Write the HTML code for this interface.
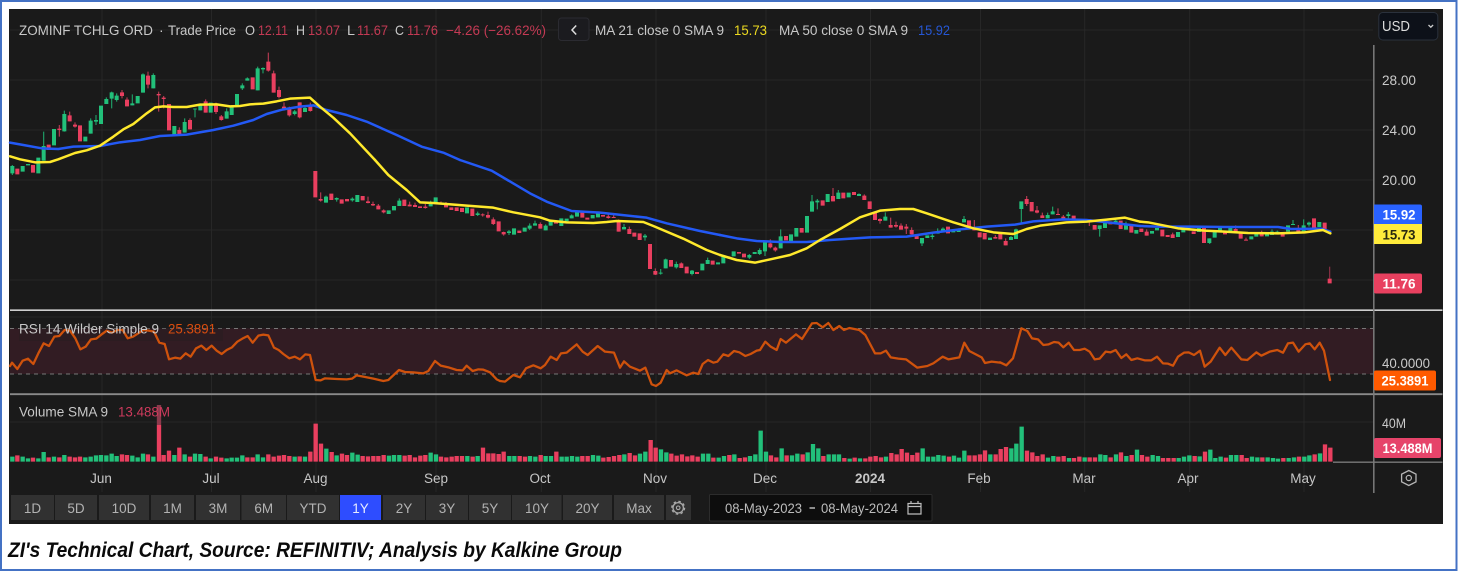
<!DOCTYPE html>
<html lang="en"><head><meta charset="utf-8"><title>ZI's Technical Chart</title>
<style>
html,body{margin:0;padding:0;background:#fff;width:1458px;height:571px;overflow:hidden}
svg{display:block}
text{font-family:"Liberation Sans",sans-serif;font-size:14px;fill:#c8c8c8}
.t{fill:#fff;font-size:14px;font-weight:700;text-anchor:middle}
.b{text-anchor:middle;fill:#b2b2b2;font-size:13.5px}
.m{text-anchor:middle;fill:#c6c6c6;font-size:13.5px}
.a{fill:#cacaca;font-size:14px}
.r{fill:#c43a54}
.gb{stroke:#22c07a;stroke-width:12;fill:none}
.rb{stroke:#e93f5f;stroke-width:12;fill:none}
.gw{stroke:#1f9e66;stroke-width:3.5;fill:none}
.rw{stroke:#b53a52;stroke-width:3.5;fill:none}
.gv{stroke:#22c07a;stroke-width:13;fill:none}
.rv{stroke:#e93f5f;stroke-width:13;fill:none}
.y{stroke:#ffe92c;stroke-width:7.5;fill:none;stroke-linejoin:round;stroke-linecap:round}
.u{stroke:#2359f5;stroke-width:7.5;fill:none;stroke-linejoin:round;stroke-linecap:round}
.s{stroke:#cf520c;stroke-width:6.8;fill:none;stroke-linejoin:round;stroke-linecap:round}
</style></head><body>
<svg width="1458" height="571" viewBox="0 0 1458 571" xmlns="http://www.w3.org/2000/svg">
<rect x="1" y="1" width="1455.5" height="569" fill="#fff" stroke="#4472c4" stroke-width="2"/>
<rect x="9" y="9" width="1434" height="515" fill="#1a1a1a"/>
<g style="filter:blur(.3px)">
<path stroke="#272727" stroke-width="1" fill="none" d="M102 9V492M211.5 9V492M316 9V492M436 9V492M541.3 9V492M656 9V492M766 9V492M870.5 9V492M980.5 9V492M1084.7 9V492M1189.7 9V492M1304 9V492M10 30H1373M10 80H1373M10 130H1373M10 180H1373M10 230H1373M10 280H1373M10 317H1373M10 363H1373M10 422H1373"/>
<rect x="10" y="328.3" width="1363" height="45.7" fill="#321c23"/>
<path stroke="#777" stroke-width="1" stroke-dasharray="4 4" fill="none" d="M10 328.5H1373M10 374H1373"/>

<g transform="translate(0,40) scale(.33333)">
<path class="gw" d="M37 375V405M131 275V362M193 212V275M272 235V281M288 225V255M319 172V192M335 155V205M350 160V185M397 163V196M429 100V158M460 100V145M554 235V278M585 205V232M601 190V211M680 205V236M695 195V225M727 130V150M742 112V122M773 80V151M789 82V100M884 210V226M915 195V216"/>
<path class="rw" d="M178 255V290M209 215V244M225 247V263M366 150V175M381 172V199M444 95V145M476 155V215M491 168V205M538 262V285M570 235V268M617 178V218M648 188V222M664 225V242M805 38V95M821 92V158M837 140V175M852 187V212M868 200V230M899 187V235M931 188V215"/>
<path class="gb" d="M37 378V400M68 378V395M84 372V376M115 353V400M131 318V362M162 267V316M193 222V274M256 290V304M272 242V281M288 240V245M303 197V252M319 177V192M335 157V176M350 167V180M397 190V196M413 168V190M429 103V158M460 105V145M523 258V285M554 246V278M585 206V208M601 194V211M632 188V218M680 214V236M695 200V225M711 162V197M727 136V145M742 115V122M773 85V151M789 84V88M884 214V222M915 204V216"/>
<path class="rb" d="M52 386V403M99 375V398M146 314V330M178 266V270M209 226V244M225 254V260M240 256V304M366 157V168M381 179V199M444 107V134M476 162V166M491 173V177M507 192V271M538 270V285M570 240V268M617 184V218M648 193V216M664 229V240M758 112V148M805 65V92M821 100V158M837 150V171M852 200V205M868 204V226M899 187V232M931 195V213"/>
</g>
<g transform="translate(300,160) scale(.33333)">
<path class="gw" d="M78 107V128M110 112V125M157 112V125M298 115V138M392 122V139M533 155V168M627 210V225M689 190V210M705 182V197M737 193V211M752 180V197M815 163V175M894 154V172M972 192V208M1035 222V242M1082 327V344M1097 296V325M1129 305V326M1176 330V346M1223 293V312"/>
<path class="rw" d="M62 97V125M204 110V130M219 125V138M235 132V148M251 148V160M329 125V139M345 128V141M376 132V146M423 124V134M438 126V142M548 160V170M564 155V175M580 172V195M611 215V227M721 187V206M925 163V176M941 165V174M956 178V215M988 200V222M1066 325V345M1144 307V324"/>
<path class="gb" d="M78 110V128M110 114V119M157 116V121M172 105V126M266 151V162M282 138V151M298 122V138M392 127V139M407 112V128M501 142V160M533 160V165M627 214V219M642 205V224M674 203V215M689 197V206M705 190V197M737 197V211M752 184V197M784 175V198M800 176V184M815 166V175M831 155V170M878 165V175M894 156V172M972 201V208M1035 227V232M1082 338V341M1097 298V325M1129 312V322M1176 332V342M1207 311V331M1223 300V312M1254 307V313"/>
<path class="rb" d="M46 33V112M62 117V122M94 101V120M125 118V131M141 117V124M188 108V121M204 124V129M219 132V136M235 137V148M251 151V157M313 119V138M329 134V139M345 135V141M360 139V144M376 140V144M423 128V130M438 132V142M454 142V150M470 142V153M486 144V156M517 146V168M548 163V166M564 165V173M580 178V192M596 184V214M611 216V223M658 212V219M721 192V206M768 182V191M847 157V173M862 173V179M909 165V170M925 169V174M941 171V174M956 181V215M988 207V222M1003 218V230M1019 220V240M1050 252V327M1066 333V344M1113 300V320M1144 310V324M1160 320V340M1191 336V342M1238 302V314"/>
</g>
<g transform="translate(720,180) scale(.33333)">
<path class="gw" d="M88 222V237M119 205V225M135 184V228M182 148V205M276 45V95M292 57V88M355 30V57M417 40V48M496 97V122M606 174V198M637 162V178M653 145V161M669 142V156M716 145V156M732 108V127M873 168V180M888 146V177M904 87V130M983 98V115M998 80V103M1045 96V115M1139 147V170M1187 115V132M1218 125V149"/>
<path class="rw" d="M151 178V205M166 200V215M339 24V64M433 43V60M480 115V131M512 113V143M528 125V143M543 130V149M559 132V162M575 142V163M763 120V151M826 165V176M857 175V196M920 48V78M951 78V100M967 98V114M1014 85V105M1030 105V116M1108 117V138"/>
<path class="gb" d="M10 226V250M41 214V229M88 225V233M104 216V222M119 210V222M135 184V214M182 169V205M213 163V186M229 144V170M261 108V158M276 64V95M292 62V67M323 42V66M355 38V57M386 38V52M417 42V48M496 110V122M606 174V190M622 166V174M637 167V171M653 155V161M669 146V156M700 150V157M716 150V156M732 117V127M810 173V180M873 171V180M888 148V177M904 64V87M983 105V115M998 94V103M1045 103V108M1092 119V124M1139 136V147M1155 127V144M1187 122V132M1218 135V149"/>
<path class="rb" d="M25 229V234M57 216V221M72 221V232M151 190V202M166 203V211M198 168V181M245 144V158M308 61V77M339 48V64M370 38V55M402 36V45M433 47V60M449 64V87M465 96V120M480 117V123M512 135V143M528 135V140M543 137V149M559 140V146M575 150V163M590 168V177M684 140V160M747 121V140M763 142V151M779 157V172M794 159V178M826 171V176M841 159V178M857 183V196M920 57V72M935 66V94M951 91V98M967 106V114M1014 102V105M1030 110V116M1061 107V120M1077 117V127M1108 117V125M1124 135V149M1171 124V133M1202 122V147M1234 137V158"/>
</g>
<g transform="translate(1100,200) scale(.33333)">
<path class="gw" d="M329 115V132M516 88V105M532 92V100M579 60V75M611 58V95M627 65V80"/>
<path class="rw" d="M140 88V107M218 98V114M407 76V98M438 113V122M485 92V109M595 75V98"/>
<path class="gb" d="M109 90V101M156 93V101M171 84V91M234 96V111M250 87V97M265 80V87M297 84V96M328 115V129M344 96V113M360 82V96M391 82V98M454 109V118M469 97V110M501 101V109M516 95V105M532 95V100M564 76V95M579 72V75M611 76V95M627 68V74M658 66V81"/>
<path class="rb" d="M124 86V96M140 95V107M187 89V109M203 105V111M218 103V114M281 94V102M312 80V129M375 95V103M407 87V98M422 96V116M438 119V122M485 100V109M548 99V110M595 84V98M642 55V87M674 68V90M689 236V250"/>
<path stroke="#8c3046" stroke-width="3.5" fill="none" d="M689 200V236"/>
</g>

<g transform="translate(0,40) scale(.33333)" fill="none">
<path class="u" d="M30 308L70 315 125 325 175 327 220 320 300 318 360 307 420 300 480 288 560 284 640 270 700 257 760 240 800 222 850 208 900 200 940 196 980 210 1040 225 1100 245 1190 285 1265 320 1330 338 1380 360"/>
</g>
<g transform="translate(300,160) scale(.33333)">
<path class="u" d="M480 0L575 32 690 100 740 125 815 153 900 158 1040 173 1100 190 1200 213 1260 225"/>
</g>
<g transform="translate(720,180) scale(.33333)">
<path class="u" d="M0 165L50 175 110 183 180 186 260 186 330 180 450 172 560 170 640 158 720 148 800 140 885 134 940 124 1030 118 1100 120 1170 128 1260 138"/>
</g>
<g transform="translate(958,0) scale(.33333)">
<path class="u" d="M546 678L600 680 700 680 800 681 960 681 1000 687 1090 686 1117 695"/>
</g>
<g transform="translate(0,40) scale(.33333)">
<path class="y" d="M30 349L60 358 105 367 150 366 175 358 225 339 260 331 300 317 340 290 370 268 400 252 440 220 465 202 490 199 520 201 560 201 600 194 650 193 690 199 720 198 750 193 790 191 830 184 870 176 930 173 960 200 1000 233 1050 280 1125 360"/>
</g>
<g transform="translate(300,160) scale(.33333)">
<path class="y" d="M225 0L265 45 320 90 360 127 400 129 500 137 580 143 640 157 720 172 750 182 800 187 880 189 920 186 950 183 1030 186 1060 198 1150 236 1220 270 1260 285"/>
</g>
<g transform="translate(720,180) scale(.33333)">
<path class="y" d="M0 225L50 240 105 248 160 236 210 225 260 205 300 180 360 147 420 112 480 92 540 87 580 87 620 100 700 127 760 145 820 157 880 162 920 147 960 137 1040 127 1100 125 1160 119 1215 113 1260 125"/>
</g>
<g transform="translate(958,0) scale(.33333)">
<path class="y" d="M546 665L570 667 660 685 740 692 800 695 870 699 960 700 1040 697 1095 690 1117 700"/>
</g>

<rect x="19" y="319" width="204" height="22" fill="#1a1a1a" opacity=".25"/>
<g transform="translate(0,300) scale(.33333)">
<path class="s" d="M30 198L36 188 52 207 68 182 84 176 100 192 115 160 131 130 147 138 163 110 178 108 194 90 210 92 226 115 241 148 257 140 273 118 289 116 305 103 320 92 336 98 352 90 368 90 383 115 399 110 415 100 430 90 446 92 462 95 478 128 494 132 507 178 525 173 541 176 557 160 572 170 588 145 604 137 619 150 635 137 650 152 665 162 680 150 696 142 712 125 727 116 743 108 758 128 775 107 790 104 805 106 822 143 836 150 850 162 868 175 884 170 900 178 916 163 930 165 947 240 962 241 975 235 990 236 1010 237 1040 238 1056 236 1070 226 1090 230 1120 236 1150 243 1165 240 1197 210 1215 216 1240 217 1270 220 1285 213 1305 183 1322 197 1345 202 1370 210 1388 211 1400 197 1418 213 1435 208 1450 209 1470 217 1490 238 1500 243"/>
</g>
<g transform="translate(500,300) scale(.33333)">
<path class="s" d="M0 243L15 245 40 225 60 232 78 205 100 196 122 205 135 195 152 170 170 180 183 160 200 158 230 133 248 155 263 165 293 138 315 155 342 158 360 203 372 184 390 200 420 212 436 203 455 253 468 258 482 248 500 210 510 220 530 211 560 226 580 218 595 222 608 192 624 180 640 188 652 185 670 163 685 168 702 153 718 157 736 168 752 162 770 152 780 150 796 125 812 140 830 150 842 117 858 128 888 103 906 117 936 70 950 69 968 82 985 69 1000 90 1018 78 1032 90 1048 84 1078 90 1096 105 1125 160 1142 160 1158 152 1172 172 1195 176 1218 178 1252 203 1282 198 1300 190 1328 170 1345 178 1378 172 1393 128 1408 153 1445 172 1455 189 1475 185 1500 188"/>
</g>
<g transform="translate(958,300) scale(.33333)">
<path class="s" d="M126 187L145 196 165 175 190 85 208 93 222 115 240 118 256 135 272 133 288 126 302 128 316 142 332 128 348 150 365 150 380 146 395 155 410 178 425 176 443 155 458 157 473 150 490 174 505 163 520 180 538 175 560 181 580 181 597 170 615 190 630 191 645 197 660 170 678 158 692 157 708 165 726 152 740 200 758 185 785 143 802 165 820 143 850 178 868 180 895 157 910 167 935 155 958 150 975 158 990 130 1005 128 1022 155 1042 133 1055 130 1070 148 1085 128 1098 152 1116 240"/>
</g>

<g transform="translate(0,300) scale(.33333)">
<path class="gv" d="M37 485V470M68 485V470M84 485V475M115 485V475M131 485V456M162 485V470M193 485V465M256 485V472M272 485V470M288 485V466M303 485V465M319 485V466M335 485V461M350 485V468M397 485V467M413 485V472M429 485V461M460 485V470M523 485V465M554 485V463M585 485V461M601 485V462M632 485V475M680 485V475M695 485V473M711 485V473M727 485V466M773 485V463M789 485V472M884 485V470M915 485V470M979 485V446M1010 485V466M1057 485V458M1073 485V464M1167 485V467M1182 485V465M1198 485V465M1292 485V458M1308 485V463M1402 485V468M1433 485V468"/>
<path class="rv" d="M52 485V466M99 485V473M146 485V472M178 485V472M209 485V470M225 485V472M240 485V470M366 485V463M381 485V465M444 485V463M491 485V465M507 485V452M538 485V443M570 485V470M617 485V470M648 485V470M664 485V473M742 485V472M758 485V472M805 485V463M821 485V470M837 485V467M852 485V465M868 485V468M899 485V469M931 485V455M947 485V371M963 485V431M995 485V456M1026 485V461M1041 485V465M1088 485V468M1104 485V469M1120 485V468M1135 485V468M1151 485V465M1214 485V467M1229 485V465M1245 485V472M1261 485V467M1276 485V465M1323 485V470M1339 485V472M1355 485V470M1370 485V468M1386 485V468M1418 485V470M1449 485V443M1465 485V460M1480 485V460M1496 485V462M477 485V375"/>
<path stroke="#8c3a4c" stroke-width="13" fill="none" d="M477 375V315"/>
</g>
<g transform="translate(500,300) scale(.33333)">
<path class="gv" d="M28 485V468M43 485V468M90 485V468M106 485V470M137 485V468M153 485V468M185 485V470M200 485V470M216 485V468M232 485V470M279 485V465M295 485V467M373 485V463M420 485V461M436 485V455M483 485V448M499 485V457M609 485V461M625 485V461M656 485V473M672 485V468M703 485V463M750 485V468M766 485V463M782 485V392M798 485V455M845 485V445M876 485V466M892 485V461M923 485V457M939 485V432M955 485V445M986 485V463M1002 485V463M1017 485V463M1049 485V476M1080 485V475M1158 485V470M1268 485V445M1284 485V470M1300 485V470M1315 485V465M1331 485V467M1362 485V467"/>
<path class="rv" d="M11 485V455M59 485V468M75 485V470M122 485V465M169 485V455M247 485V468M263 485V468M310 485V473M326 485V471M342 485V468M358 485V465M389 485V459M405 485V466M452 485V420M467 485V443M514 485V461M530 485V467M546 485V463M562 485V469M577 485V466M593 485V470M640 485V473M688 485V465M719 485V474M735 485V472M813 485V466M829 485V472M860 485V466M908 485V463M970 485V468M1033 485V474M1064 485V473M1096 485V475M1111 485V470M1127 485V468M1143 485V472M1174 485V459M1190 485V463M1205 485V447M1221 485V458M1237 485V465M1252 485V458M1347 485V470"/>
</g>
<g transform="translate(958,300) scale(.33333)">
<path class="gv" d="M3 485V473M19 485V452M97 485V463M160 485V445M175 485V431M191 485V380M270 485V473M286 485V468M333 485V474M380 485V472M427 485V463M442 485V465M474 485V463M505 485V468M537 485V449M584 485V465M600 485V468M662 485V474M678 485V470M694 485V466M725 485V469M757 485V449M772 485V474M788 485V470M819 485V465M835 485V465M882 485V470M898 485V472M929 485V472M945 485V474M960 485V476M992 485V474M1008 485V472M1039 485V470M1054 485V466M1086 485V460"/>
<path class="rv" d="M34 485V466M50 485V466M66 485V463M81 485V451M113 485V463M128 485V447M144 485V441M207 485V452M223 485V457M238 485V468M254 485V463M301 485V470M317 485V468M348 485V474M364 485V470M395 485V472M411 485V472M458 485V472M489 485V457M521 485V465M552 485V465M568 485V470M615 485V474M631 485V474M647 485V474M710 485V468M741 485V455M804 485V473M851 485V465M866 485V474M913 485V472M976 485V474M1023 485V470M1070 485V463M1101 485V433M1117 485V443"/>
</g>

<path stroke="#cfcfcf" stroke-width="1.6" fill="none" d="M10 310.2H1442.5"/>
<path stroke="#8a8a8a" stroke-width="1.8" fill="none" d="M10 394.2H1442.5"/>
<path stroke="#7a7a7a" stroke-width="1.4" fill="none" d="M1333 462.2H1442.5"/>
<path stroke="#7c7c7c" stroke-width="1.5" fill="none" d="M1373.8 45V493"/>

<!-- legend -->
<text x="19" y="35" textLength="134" lengthAdjust="spacingAndGlyphs">ZOMINF TCHLG ORD</text>
<text x="159" y="35">·</text>
<text x="168" y="35" textLength="68" lengthAdjust="spacingAndGlyphs">Trade Price</text>
<text x="245" y="35" textLength="10" lengthAdjust="spacingAndGlyphs">O</text><text class="r" x="258" y="35" textLength="30" lengthAdjust="spacingAndGlyphs">12.11</text>
<text x="296" y="35" textLength="9" lengthAdjust="spacingAndGlyphs">H</text><text class="r" x="308" y="35" textLength="32" lengthAdjust="spacingAndGlyphs">13.07</text>
<text x="347" y="35" textLength="8" lengthAdjust="spacingAndGlyphs">L</text><text class="r" x="357" y="35" textLength="31" lengthAdjust="spacingAndGlyphs">11.67</text>
<text x="395" y="35" textLength="9" lengthAdjust="spacingAndGlyphs">C</text><text class="r" x="407" y="35" textLength="31" lengthAdjust="spacingAndGlyphs">11.76</text>
<text class="r" x="446" y="35" textLength="100" lengthAdjust="spacingAndGlyphs">−4.26 (−26.62%)</text>
<rect x="558.5" y="18" width="30.5" height="22.5" rx="3" fill="#1b1b1f" stroke="#2b2b31"/>
<path d="M576.2 25.5L572 30L576.2 34.5" stroke="#ddd" stroke-width="1.5" fill="none"/>
<text x="595" y="35" textLength="129" lengthAdjust="spacingAndGlyphs">MA 21 close 0 SMA 9</text>
<text x="734" y="35" textLength="33" lengthAdjust="spacingAndGlyphs" style="fill:#ecd920">15.73</text>
<text x="779" y="35" textLength="129" lengthAdjust="spacingAndGlyphs">MA 50 close 0 SMA 9</text>
<text x="918" y="35" textLength="32" lengthAdjust="spacingAndGlyphs" style="fill:#2657d4">15.92</text>
<rect x="1378.8" y="12.5" width="59" height="27.5" rx="4" fill="#0d1119" stroke="#2a313c"/>
<text x="1382" y="31" textLength="28" lengthAdjust="spacingAndGlyphs" style="font-size:14.5px;fill:#dcdcdc">USD</text>
<path d="M1428.5 25l2.3 2.2 2.3-2.2" stroke="#ccc" stroke-width="1.3" fill="none"/>

<!-- axis -->
<text class="a" x="1382" y="85" textLength="34" lengthAdjust="spacingAndGlyphs">28.00</text>
<text class="a" x="1382" y="135" textLength="34" lengthAdjust="spacingAndGlyphs">24.00</text>
<text class="a" x="1382" y="185" textLength="34" lengthAdjust="spacingAndGlyphs">20.00</text>
<text class="a" x="1382" y="368" textLength="48" lengthAdjust="spacingAndGlyphs">40.0000</text>
<text class="a" x="1382" y="428" textLength="24" lengthAdjust="spacingAndGlyphs">40M</text>
<path d="M1374 204.5h46a2 2 0 0 1 2 2v18h-48z" fill="#2962ff"/>
<path d="M1374 224h48v18a2 2 0 0 1-2 2h-46z" fill="#ffeb3b"/>
<rect x="1374" y="273.5" width="48" height="20" rx="2" fill="#e8405f"/>
<rect x="1374" y="370.5" width="62" height="20" rx="2" fill="#ff5a00"/>
<rect x="1374" y="438" width="67" height="20" rx="2" fill="#e6446a"/>
<text class="t" x="1399" y="219.5" textLength="33" lengthAdjust="spacingAndGlyphs">15.92</text>
<text class="t" x="1399" y="239.5" textLength="33" lengthAdjust="spacingAndGlyphs" style="fill:#2a2a10">15.73</text>
<text class="t" x="1399" y="288.5" textLength="33" lengthAdjust="spacingAndGlyphs">11.76</text>
<text class="t" x="1405" y="385.5" textLength="47" lengthAdjust="spacingAndGlyphs">25.3891</text>
<text class="t" x="1407.5" y="453" textLength="50" lengthAdjust="spacingAndGlyphs">13.488M</text>

<!-- pane legends -->
<text x="19" y="333.5" textLength="140" lengthAdjust="spacingAndGlyphs">RSI 14 Wilder Simple 9</text>
<text x="168" y="333.5" textLength="48" lengthAdjust="spacingAndGlyphs" style="fill:#d84c0e">25.3891</text>
<text x="19" y="416.5" textLength="89" lengthAdjust="spacingAndGlyphs">Volume SMA 9</text>
<text x="118" y="416.5" textLength="52" lengthAdjust="spacingAndGlyphs" style="fill:#cc3a5c">13.488M</text>

<!-- months -->
<text class="m" x="101" y="483">Jun</text><text class="m" x="211" y="483">Jul</text><text class="m" x="315.5" y="483">Aug</text><text class="m" x="436" y="483">Sep</text><text class="m" x="540" y="483">Oct</text><text class="m" x="655" y="483">Nov</text><text class="m" x="765" y="483">Dec</text><text class="m" x="870" y="483" style="font-weight:700">2024</text><text class="m" x="979" y="483">Feb</text><text class="m" x="1084" y="483">Mar</text><text class="m" x="1188" y="483">Apr</text><text class="m" x="1303" y="483">May</text>
<path d="M1408.8 470.5l7.2 3.7v7.6l-7.2 3.7-7.2-3.7v-7.6z" fill="none" stroke="#b5b5b5" stroke-width="1.3"/>
<circle cx="1408.8" cy="478" r="2.6" fill="none" stroke="#b5b5b5" stroke-width="1.2"/>

<!-- range buttons -->
<g fill="#313131">
<rect x="11" y="495" width="43" height="25"/><rect x="55" y="495" width="42" height="25"/><rect x="99" y="495" width="50" height="25"/><rect x="151" y="495" width="43" height="25"/><rect x="196" y="495" width="44" height="25"/><rect x="241.5" y="495" width="44.5" height="25"/><rect x="287" y="495" width="52" height="25"/><rect x="383" y="495" width="42" height="25"/><rect x="426" y="495" width="42" height="25"/><rect x="469" y="495" width="42" height="25"/><rect x="512" y="495" width="49.5" height="25"/><rect x="563" y="495" width="49" height="25"/><rect x="614" y="495" width="50" height="25"/><rect x="666" y="495" width="25" height="25"/>
</g>
<rect x="340" y="495" width="41" height="25" fill="#2e4dff"/>
<text class="b" x="32.5" y="513">1D</text><text class="b" x="76" y="513">5D</text><text class="b" x="124" y="513">10D</text><text class="b" x="172.5" y="513">1M</text><text class="b" x="218" y="513">3M</text><text class="b" x="263.7" y="513">6M</text><text class="b" x="313" y="513">YTD</text><text class="b" x="360.5" y="513" style="fill:#e8ecff">1Y</text><text class="b" x="404" y="513">2Y</text><text class="b" x="447" y="513">3Y</text><text class="b" x="490" y="513">5Y</text><text class="b" x="537" y="513">10Y</text><text class="b" x="587.5" y="513">20Y</text><text class="b" x="639" y="513">Max</text>
<circle cx="678.2" cy="507.8" r="5.2" fill="none" stroke="#a8a8a8" stroke-width="1.3"/>
<circle cx="678.2" cy="507.8" r="6.4" fill="none" stroke="#a8a8a8" stroke-width="1.3" stroke-dasharray="2.5 2.52"/>
<circle cx="678.2" cy="507.8" r="1.8" fill="none" stroke="#a8a8a8" stroke-width="1.1"/>
<rect x="709.5" y="494.5" width="222.5" height="26.5" rx="1" fill="#0d0d0d" stroke="#2c2c2c"/>
<text x="725" y="513" textLength="77" lengthAdjust="spacingAndGlyphs" style="fill:#bcbcbc">08-May-2023</text>
<path d="M809.5 508H815" stroke="#c4c4c4" stroke-width="1.4"/>
<text x="821" y="513" textLength="77" lengthAdjust="spacingAndGlyphs" style="fill:#bcbcbc">08-May-2024</text>
<path d="M908 503.5H921V514H908zM908 506.5H921M911 501V504M918 501V504" fill="none" stroke="#bdbdbd" stroke-width="1.2"/>
</g>

<text x="8" y="557" textLength="614" lengthAdjust="spacingAndGlyphs" style="font-size:21px;font-weight:700;font-style:italic;fill:#0a0a0a">ZI's Technical Chart, Source: REFINITIV; Analysis by Kalkine Group</text>
</svg>
</body></html>
